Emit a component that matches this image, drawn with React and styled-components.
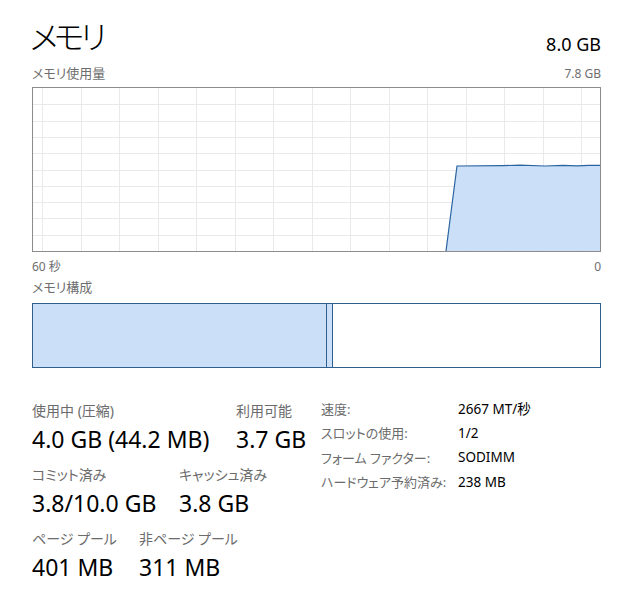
import React from "react";
import styled, { createGlobalStyle } from "styled-components";

const Global = createGlobalStyle`
  html, body { margin: 0; padding: 0; background: #ffffff; }
  body {
    font-family: "Noto Sans", "Noto Sans CJK JP", sans-serif;
    font-feature-settings: "palt";
    color: #000;
  }
`;

const Page = styled.div`
  width: 631px;
  height: 604px;
  box-sizing: border-box;
  padding: 15px 30px 0 32px;
  overflow: hidden;
`;

const Header = styled.div`
  display: flex;
  justify-content: space-between;
  align-items: flex-start;
  height: 48px;
`;

const Title = styled.div`
  font-size: 32px;
  font-weight: 300;
  line-height: 44px;
  margin-left: -2px;
  letter-spacing: -4px;
`;

const Capacity = styled.div`
  font-size: 18px;
  line-height: 24px;
  margin-top: 17px;
`;

const LabelRow = styled.div`
  display: flex;
  justify-content: space-between;
  align-items: baseline;
  box-sizing: border-box;
  height: ${(p) => p.$h || 20}px;
  padding-top: ${(p) => p.$pt || 0}px;
  line-height: 20px;
`;

const SmallLabel = styled.span`
  font-size: 13px;
  color: #6e6e6e;
`;

const SmallNumber = styled.span`
  font-size: 12px;
  color: #6e6e6e;
`;

const ChartFrame = styled.div`
  border: 1px solid #8c8c8c;
  height: 163px;
  display: flex;
`;

const CompositionBar = styled.div`
  margin-top: 6px;
  border: 1px solid #2f5f8e;
  height: 63px;
  display: flex;
`;

const Segment = styled.div`
  width: ${(p) => p.$w || 0}px;
  flex: ${(p) => (p.$grow ? 1 : "none")};
  background: ${(p) => (p.$filled ? "#cbe0f8" : "#ffffff")};
  border-right: ${(p) => (p.$edge ? "1px solid #2f5f8e" : "none")};
`;

const Stats = styled.div`
  display: flex;
  margin-top: 34px;
`;

const LeftStats = styled.div`
  width: 289px;
  display: flex;
  flex-direction: column;
  gap: 12px;
`;

const StatRow = styled.div`
  display: flex;
`;

const Stat = styled.div`
  display: flex;
  flex-direction: column;
  width: ${(p) => (p.$w ? `${p.$w}px` : "auto")};
  flex: none;
  white-space: nowrap;
`;

const StatLabel = styled.div`
  font-size: 14px;
  line-height: 18px;
  color: #6b6b6b;
`;

const StatValue = styled.div`
  font-size: 23px;
  line-height: 30px;
  margin-top: 4px;
  color: #000;
`;

const InfoGrid = styled.div`
  display: grid;
  grid-template-columns: 137px auto;
  grid-auto-rows: 24.5px;
  align-items: center;
  margin-top: -6px;
  white-space: nowrap;
`;

const InfoLabel = styled.div`
  font-size: 13px;
  color: #6b6b6b;
`;

const InfoValue = styled.div`
  font-size: 13.5px;
  color: #000;
`;

const W = 567;
const H = 163;

function UsageChart() {
  const vlines = [];
  for (let x = 9; x < W; x += 38.5) vlines.push(Math.round(x) + 0.5);
  const hlines = [];
  for (let i = 1; i < 10; i++) hlines.push(Math.round(i * 16.3) + 0.5);
  const area = [
    [413, H],
    [424, 78],
    [470, 77.6],
    [487, 77.2],
    [512, 78],
    [530, 77.4],
    [544, 77.8],
    [556, 77.3],
    [W, 77.3],
  ];
  const linePts = area.map((p) => p.join(",")).join(" ");
  const areaPts = linePts + ` ${W},${H}`;
  return (
    <svg width={W} height={H} viewBox={`0 0 ${W} ${H}`} style={{ display: "block" }}>
      {vlines.map((x) => (
        <line key={"v" + x} x1={x} y1={0} x2={x} y2={H} stroke="#e9e9e9" strokeWidth="1" />
      ))}
      {hlines.map((y) => (
        <line key={"h" + y} x1={0} y1={y} x2={W} y2={y} stroke="#e9e9e9" strokeWidth="1" />
      ))}
      <polygon points={areaPts} fill="#c7ddf7" fillOpacity="0.92" />
      <polyline points={linePts} fill="none" stroke="#2a64a0" strokeWidth="1.2" />
    </svg>
  );
}

const leftStats = [
  [
    { label: "使用中 (圧縮)", value: "4.0 GB (44.2 MB)", w: 204 },
    { label: "利用可能", value: "3.7 GB" },
  ],
  [
    { label: "コミット済み", value: "3.8/10.0 GB", w: 147 },
    { label: "キャッシュ済み", value: "3.8 GB" },
  ],
  [
    { label: "ページ プール", value: "401 MB", w: 107 },
    { label: "非ページ プール", value: "311 MB" },
  ],
];

const info = [
  ["速度:", "2667 MT/秒"],
  ["スロットの使用:", "1/2"],
  ["フォーム ファクター:", "SODIMM"],
  ["ハードウェア予約済み:", "238 MB"],
];

export default function App() {
  return (
    <>
      <Global />
      <Page>
        <Header>
          <Title>メモリ</Title>
          <Capacity>8.0 GB</Capacity>
        </Header>
        <LabelRow $h={24}>
          <SmallLabel>メモリ使用量</SmallLabel>
          <SmallNumber>7.8 GB</SmallNumber>
        </LabelRow>
        <ChartFrame>
          <UsageChart />
        </ChartFrame>
        <LabelRow $h={25} $pt={5}>
          <SmallNumber>60 秒</SmallNumber>
          <SmallNumber>0</SmallNumber>
        </LabelRow>
        <LabelRow $h={20}>
          <SmallLabel>メモリ構成</SmallLabel>
        </LabelRow>
        <CompositionBar>
          <Segment $w={293} $filled $edge />
          <Segment $w={5} $filled $edge />
          <Segment $grow />
        </CompositionBar>
        <Stats>
          <LeftStats>
            {leftStats.map((row, i) => (
              <StatRow key={i}>
                {row.map((s) => (
                  <Stat key={s.label} $w={s.w}>
                    <StatLabel>{s.label}</StatLabel>
                    <StatValue>{s.value}</StatValue>
                  </Stat>
                ))}
              </StatRow>
            ))}
          </LeftStats>
          <InfoGrid>
            {info.map(([l, v]) => (
              <React.Fragment key={l}>
                <InfoLabel>{l}</InfoLabel>
                <InfoValue>{v}</InfoValue>
              </React.Fragment>
            ))}
          </InfoGrid>
        </Stats>
      </Page>
    </>
  );
}
